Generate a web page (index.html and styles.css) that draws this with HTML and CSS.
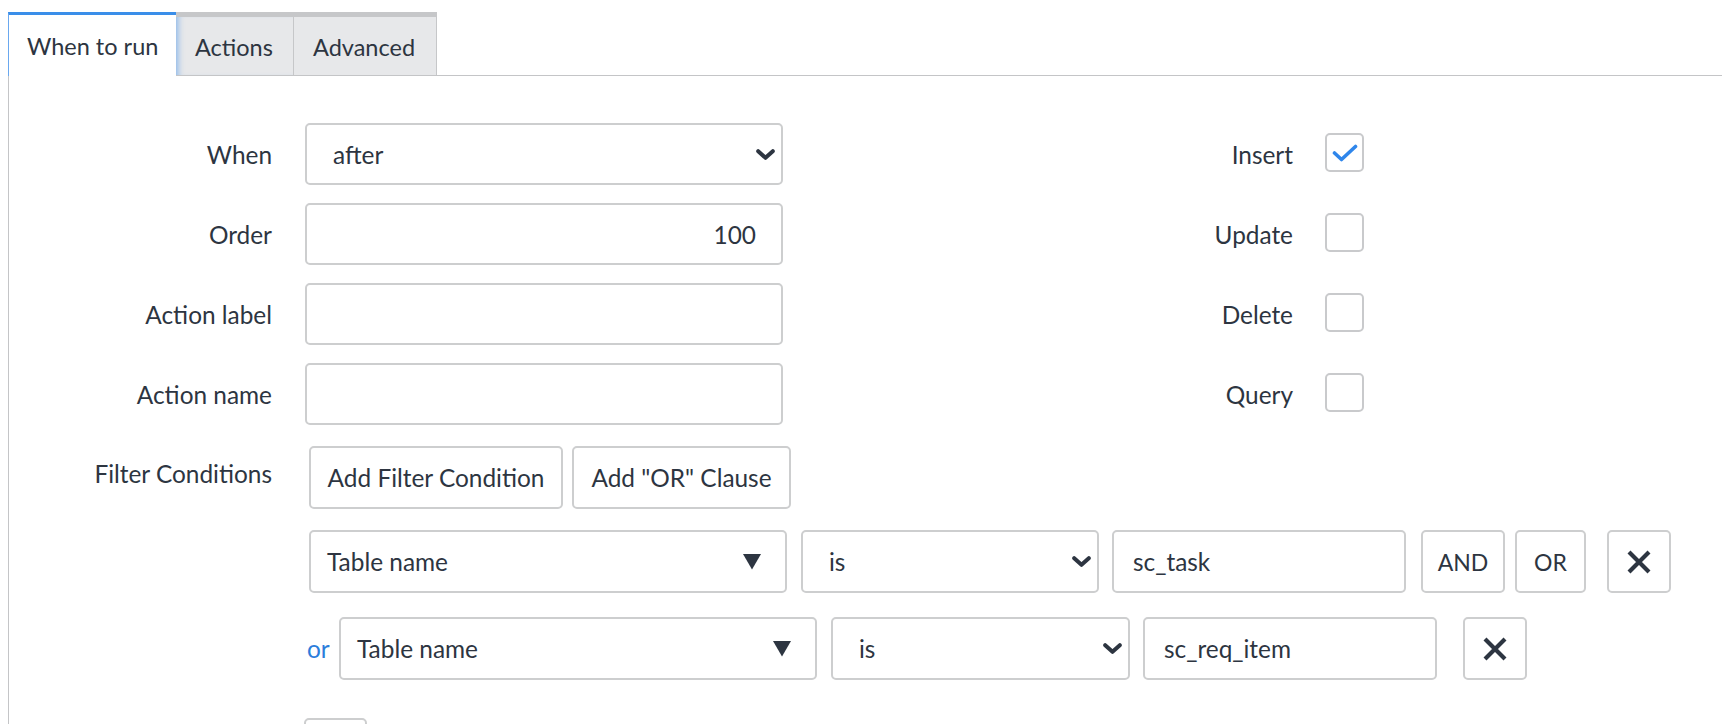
FILE: index.html
```html
<!DOCTYPE html>
<html>
<head>
<meta charset="utf-8">
<title>Business Rule</title>
<link rel="stylesheet" href="styles.css">
</head>
<body>
<div class="page">
  <div class="tabs">
    <div class="tab active">When to run</div>
    <div class="tab inactive first-inactive">Actions</div>
    <div class="tab inactive">Advanced</div>
  </div>
  <div class="panel">
    <div class="form">
      <div class="lbl">When</div>
      <div class="ctrl select"><span class="val">after</span>
        <svg class="chev" width="19" height="11" viewBox="0 0 19 11"><polyline points="2.2,2.2 9.5,8.8 16.8,2.2" fill="none" stroke="#2d3541" stroke-width="4" stroke-linecap="round" stroke-linejoin="round"/></svg>
      </div>
      <div class="clbl">Insert</div>
      <div class="cb"><svg width="26" height="18" viewBox="0 0 26 18"><polyline points="2.5,9 9.5,15.5 23.5,2.5" fill="none" stroke="#2f86eb" stroke-width="3.6" stroke-linecap="round" stroke-linejoin="round"/></svg></div>

      <div class="lbl">Order</div>
      <div class="ctrl num"><span class="val">100</span></div>
      <div class="clbl">Update</div>
      <div class="cb"></div>

      <div class="lbl">Action label</div>
      <div class="ctrl"></div>
      <div class="clbl">Delete</div>
      <div class="cb"></div>

      <div class="lbl">Action name</div>
      <div class="ctrl"></div>
      <div class="clbl">Query</div>
      <div class="cb"></div>
    </div>

    <div class="filter">
      <div class="lbl flbl">Filter Conditions</div>
      <div class="conds">
        <div class="btnrow">
          <div class="btn w-add">Add Filter Condition</div>
          <div class="btn w-or">Add "OR" Clause</div>
        </div>
        <div class="crow row1">
          <div class="box field"><span>Table name</span>
            <svg class="tri" width="20" height="17" viewBox="0 0 20 17"><polygon points="1,1 19,1 10,16.5" fill="#2d3541"/></svg>
          </div>
          <div class="box oper"><span>is</span>
            <svg class="chev" width="19" height="11" viewBox="0 0 19 11"><polyline points="2.2,2.2 9.5,8.8 16.8,2.2" fill="none" stroke="#2d3541" stroke-width="4" stroke-linecap="round" stroke-linejoin="round"/></svg>
          </div>
          <div class="box valbox"><span>sc_task</span></div>
          <div class="btn w-and">AND</div>
          <div class="btn w-orb">OR</div>
          <div class="btn w-x">
            <svg width="24" height="24" viewBox="0 0 24 24"><path d="M2 2 L22 22 M22 2 L2 22" fill="none" stroke="#2d3541" stroke-width="4.2"/></svg>
          </div>
        </div>
        <div class="crow row2">
          <span class="or">or</span>
          <div class="box field"><span>Table name</span>
            <svg class="tri" width="20" height="17" viewBox="0 0 20 17"><polygon points="1,1 19,1 10,16.5" fill="#2d3541"/></svg>
          </div>
          <div class="box oper wide"><span>is</span>
            <svg class="chev" width="19" height="11" viewBox="0 0 19 11"><polyline points="2.2,2.2 9.5,8.8 16.8,2.2" fill="none" stroke="#2d3541" stroke-width="4" stroke-linecap="round" stroke-linejoin="round"/></svg>
          </div>
          <div class="box valbox"><span>sc_req_item</span></div>
          <div class="btn w-x far">
            <svg width="24" height="24" viewBox="0 0 24 24"><path d="M2 2 L22 22 M22 2 L2 22" fill="none" stroke="#2d3541" stroke-width="4.2"/></svg>
          </div>
        </div>
        <div class="more"></div>
      </div>
    </div>
  </div>
</div>
</body>
</html>
```

FILE: styles.css
```css
* { box-sizing: border-box; }
html, body { margin: 0; padding: 0; background: #fff; }
body {
  font-family: "Lato", "Source Sans Pro", "Liberation Sans", sans-serif;
  color: #2d3541;
  overflow: hidden;
  height: 724px;
}
.page { padding: 12px 0 0 8px; }

.tabs { display: flex; height: 63px; align-items: flex-start; }
.tab {
  font-size: 23.5px;
  height: 63px;
  display: flex;
  align-items: center;
  padding-left: 18px;
}
.tab.active {
  width: 168px;
  height: 64px;
  margin-bottom: -1px;
  background: #fff;
  border-top: 3px solid #3a8ee9;
  border-left: 1px solid #6aa8ef;
  position: relative;
  z-index: 1;
  padding-top: 0;
}
.tab.inactive {
  background: #e7e8ea;
  border-top: 5px solid #c6c7c9;
  border-right: 1px solid #c6c7c9;
  padding-left: 19px;
  padding-top: 1px;
}
.first-inactive { width: 118px; box-shadow: inset 7px 0 6px -5px rgba(58,142,233,0.55); }
.tab.inactive:last-child { width: 143px; }

.panel {
  border-top: 1px solid #c4c5c7;
  border-left: 1px solid #c4c5c7;
  height: 649px;
  overflow: hidden;
  padding-top: 47px;
}

.form {
  display: grid;
  grid-template-columns: 296px 478px 542px 39px;
  grid-auto-rows: 62px;
  row-gap: 18px;
  align-items: center;
}
.lbl {
  font-size: 24.4px;
  text-align: right;
  padding-right: 33px;
}
.clbl {
  font-size: 24.4px;
  text-align: right;
  padding-right: 32px;
}
.ctrl {
  height: 62px;
  border: 2px solid #cdcecf;
  border-radius: 5px;
  font-size: 24.4px;
  display: flex;
  align-items: center;
  padding: 0 25px 0 26px;
}
.ctrl.select { justify-content: space-between; padding-right: 6px; }
.ctrl.num { justify-content: flex-end; }
.chev { display: block; }
.cb {
  width: 39px;
  height: 39px;
  border: 2px solid #c9cacc;
  border-radius: 5px;
  display: flex;
  align-items: center;
  justify-content: center;
  margin-top: -3px;
}
.cb svg { margin-top: 1px; }

.filter {
  display: grid;
  grid-template-columns: 296px auto;
  margin-top: 21px;
}
.flbl { padding-top: 13px; line-height: 30px; }
.conds { display: flex; flex-direction: column; align-items: flex-start; }

.btnrow { display: flex; gap: 9px; margin-left: 4px; }
.btn {
  height: 63px;
  border: 2px solid #cdcecf;
  border-radius: 5px;
  font-size: 24.4px;
  display: flex;
  align-items: center;
  justify-content: center;
  background: #fff;
}
.w-add { width: 254px; }
.w-or { width: 219px; }
.w-and { width: 84px; margin-left: 15px; font-size: 23px; }
.w-orb { width: 71px; margin-left: 10px; font-size: 23px; }
.w-x { width: 64px; margin-left: 21px; }
.w-x.far { margin-left: 26px; }

.crow { display: flex; align-items: center; }
.row1 { margin-top: 21px; margin-left: 4px; }
.row2 { margin-top: 24px; }
.box {
  height: 63px;
  border: 2px solid #cdcecf;
  border-radius: 5px;
  font-size: 24.4px;
  display: flex;
  align-items: center;
}
.field { width: 478px; padding: 0 23px 0 16px; justify-content: space-between; }
.oper { width: 298px; margin-left: 14px; padding: 0 6px 0 26px; justify-content: space-between; }
.oper.wide { width: 299px; }
.valbox { width: 294px; margin-left: 13px; padding-left: 19px; }
.or {
  width: 34px;
  padding-left: 2px;
  font-size: 24.4px;
  color: #2b7ddb;
}
.more {
  margin-top: 38px;
  margin-left: -1px;
  width: 63px;
  height: 60px;
  border: 2px solid #cdcecf;
  border-radius: 5px;
}
```
